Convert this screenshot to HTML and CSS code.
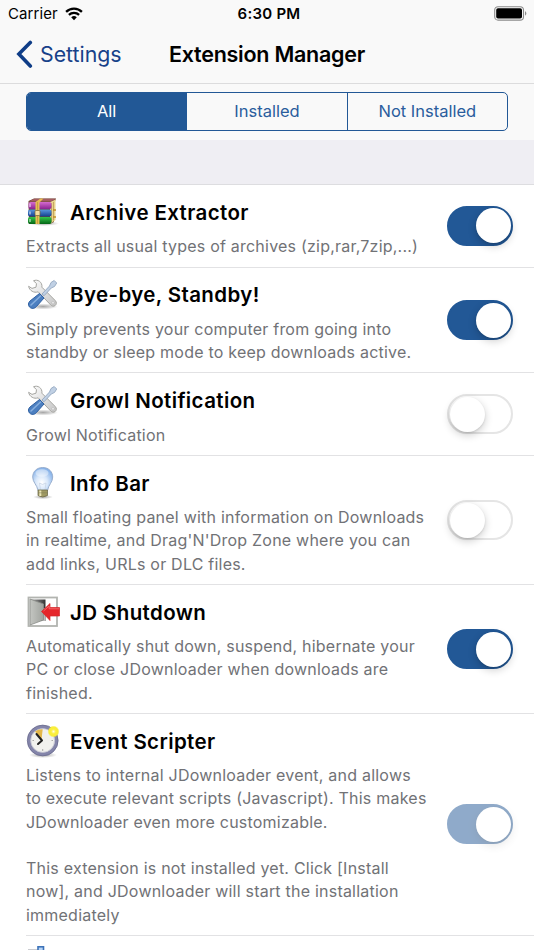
FILE: index.html
```
<!DOCTYPE html>
<html lang="en">
	<head>
		<meta charset="utf-8">
		<title>Extension Manager</title>
		<link rel="stylesheet" href="styles.css">
	</head>
	<body>
		<svg class="defs" width="0" height="0">
			<defs>
				<linearGradient id="steel" x1="0" y1="0" x2="1" y2="1">
					<stop offset="0" stop-color="#fff"/><stop offset="1" stop-color="#c4c4c4"/>
				</linearGradient>
				<linearGradient id="purple" x1="0" y1="0" x2="0" y2="1">
					<stop offset="0" stop-color="#d56bd0"/><stop offset="1" stop-color="#8b2390"/>
				</linearGradient>
				<linearGradient id="blue" x1="0" y1="0" x2="0" y2="1">
					<stop offset="0" stop-color="#5a98e0"/><stop offset="1" stop-color="#123f8f"/>
				</linearGradient>
				<linearGradient id="green" x1="0" y1="0" x2="0" y2="1">
					<stop offset="0" stop-color="#35c74c"/><stop offset="1" stop-color="#046415"/>
				</linearGradient>
				<linearGradient id="door" x1="0" y1="0" x2="1" y2="0">
					<stop offset="0" stop-color="#c4c6c2"/><stop offset="1" stop-color="#a0a39e"/>
				</linearGradient>
				<linearGradient id="dark" x1="0" y1="0" x2="1" y2="0">
					<stop offset="0" stop-color="#aaa"/><stop offset="1" stop-color="#333"/>
				</linearGradient>
				<radialGradient id="glass" cx=".45" cy=".65" r=".65">
					<stop offset="0" stop-color="#fff"/><stop offset=".45" stop-color="#d9e8fa"/><stop offset="1" stop-color="#80aee8"/>
				</radialGradient>
				<radialGradient id="spark">
					<stop offset="0" stop-color="#fffde0"/><stop offset=".4" stop-color="#fbef3c"/><stop offset=".75" stop-color="#f9ee3a"/><stop offset="1" stop-color="#f7ec30" stop-opacity="0"/>
				</radialGradient>
				<radialGradient id="shade">
					<stop offset="0" stop-color="#000" stop-opacity=".35"/><stop offset="1" stop-color="#000" stop-opacity="0"/>
				</radialGradient>
				<symbol id="tools" viewBox="0 0 34 34">
					<ellipse cx="17" cy="28.500" rx="15" ry="3" fill="url(#shade)"/>
					<path d="M7.500 2.800 C11.500 .8 16.600 4 15.900 9.200 L29.200 22.500 C32.500 25.800 28 30.300 24.800 27.100 L12.200 13.800 C8 15.400 3.300 12.500 2.600 8.300 L6 10.400 L10 9.200 L10.500 5.600 Z" fill="url(#steel)" stroke="#a6a6a2" stroke-width="1"/>
					<circle cx="27" cy="24.800" r="1.200" fill="#fff" stroke="#aaa" stroke-width=".6"/>
					<path d="M16 16 L23.500 8 L25 4.500 L28.200 2.500 L30.700 5 L28.500 8.500 L25.400 9.900 L18 17.800 Z" fill="#c0d0e4" stroke="#93a7bf" stroke-width=".9"/>
					<path d="M13.500 15.500 L18 20 L10.300 28.700 C8.500 30.800 5.400 31 3.500 29 C2 27.200 2 25 4 23 Z" fill="#4c7fc0" stroke="#2f60a2" stroke-width="1"/>
					<path d="M5 27 L14.500 18" stroke="#86aede" stroke-width="1.600" stroke-linecap="round"/>
				</symbol>
			</defs>
		</svg>

		<header class="status">
			<div class="carrier">
				<span class="carrier-name">Carrier</span>
				<svg width="18" height="14" viewBox="0 0 18 14">
					<path d="M1.100 4.900 A11.300 11.300 0 0 1 16.900 4.900" fill="none" stroke="#000" stroke-width="2.300"/>
					<path d="M3.900 7.900 A7.200 7.200 0 0 1 14.100 7.900" fill="none" stroke="#000" stroke-width="2.200"/>
					<path d="M6.200 10.300 A4 4 0 0 1 11.800 10.300 L9 13.200 Z"/>
				</svg>
			</div>
			<span class="time">6:30 PM</span>
			<svg class="battery" width="34" height="15" viewBox="0 0 34 15">
				<rect x=".7" y=".7" width="28.800" height="13.400" rx="3.400" fill="none" stroke="#8b8b8b" stroke-width="1.100"/>
				<rect x="2.200" y="2.200" width="25.800" height="10.400" rx="1.800"/>
				<path d="M31 5 Q33.800 7.400 31 9.800 Z" fill="#8b8b8b"/>
			</svg>
		</header>

		<nav class="nav">
			<a class="back" href="#">
				<svg width="17" height="28" viewBox="0 0 17 28">
					<path d="M14.300 2.500 L2.900 14.100 L14.300 26" fill="none" stroke="#0f3d87" stroke-width="3.600" stroke-linecap="round"/>
				</svg>
				<span>Settings</span>
			</a>
			<h1>Extension Manager</h1>
		</nav>

		<div class="filter">
			<div class="segments">
				<button class="segment active">All</button>
				<button class="segment">Installed</button>
				<button class="segment">Not Installed</button>
			</div>
		</div>

		<div class="spacer"></div>

		<ul class="list">
			<li class="row">
				<div class="info">
					<h2>
						<svg class="icon" viewBox="0 0 34 34">
							<ellipse cx="18" cy="28.500" rx="15" ry="2.500" fill="url(#shade)"/>
							<path d="M2.500 6 L8 3.500 H30 L28 9 V27 L24 29 H3 Z" fill="#6d4634"/>
							<path d="M24 7 L29.500 4.500 V25 L24 29 Z" fill="#ead68d"/>
							<path d="M25.500 8 V27 M27.500 7 V25.500" stroke="#ac8645" stroke-width=".6"/>
							<path d="M3 6.500 L8 3.800 H30 L25 6.500 Z" fill="#a35c61"/>
							<rect x="2.500" y="7" width="23" height="7" rx="2" fill="url(#purple)"/>
							<rect x="2" y="14.500" width="23.500" height="7" rx="2" fill="url(#blue)"/>
							<rect x="2" y="22" width="23.500" height="7" rx="2" fill="url(#green)"/>
							<path d="M4 8.500 V12 M4 16.500 V19.500 M4 24 V27" stroke="#fff" stroke-width="1.500" opacity=".6"/>
							<path d="M9.500 7 L14.500 3.500 H17.500 L13.500 7.500 V29 H9.500 Z" fill="#e7bd51"/>
							<path d="M11.500 7.500 V29" stroke="#896b2a" stroke-width=".7" stroke-dasharray="1 1"/>
							<rect x="9" y="15.500" width="5" height="5" rx="1" fill="#f4dfa0" stroke="#765e34" stroke-width=".7"/>
							<path d="M27 15 H30 M27 22 H30" stroke="#c39029" stroke-width="1.500"/>
						</svg>
						Archive Extractor
					</h2>
					<p>Extracts all usual types of archives (zip,rar,7zip,...)</p>
				</div>
				<span class="switch on"></span>
			</li>
			<li class="row">
				<div class="info">
					<h2><svg class="icon"><use href="#tools"/></svg>Bye-bye, Standby!</h2>
					<p>Simply prevents your computer from going into<br>standby or sleep mode to keep downloads active.</p>
				</div>
				<span class="switch on"></span>
			</li>
			<li class="row">
				<div class="info">
					<h2><svg class="icon"><use href="#tools"/></svg>Growl Notification</h2>
					<p>Growl Notification</p>
				</div>
				<span class="switch"></span>
			</li>
			<li class="row">
				<div class="info">
					<h2>
						<svg class="icon" viewBox="0 0 34 34">
							<ellipse cx="17" cy="31" rx="10" ry="2.200" fill="url(#shade)"/>
							<path d="M16.700 1.500 C10.400 1.500 6.700 6 6.700 11 C6.700 16.500 11 18.500 12 24.500 H21.500 C22.500 18.500 26.700 16.500 26.700 11 C26.700 6 23 1.500 16.700 1.500 Z" fill="url(#glass)" stroke="#94a9c8" stroke-width=".9"/>
							<ellipse cx="16" cy="7" rx="6.500" ry="3.800" fill="#fff" opacity=".4"/>
							<path d="M14.500 24 L13.500 17 L16.500 18.500 L20 17 L19 24" fill="none" stroke="#c9d5e6" stroke-width=".8"/>
							<path d="M12 24 H21.500 V29.500 Q16.700 32.500 12 29.500 Z" fill="#a09a63" stroke="#6f6c4c" stroke-width=".8"/>
							<path d="M14.300 24.500 V30" stroke="#ebe6b8" stroke-width="2"/>
							<path d="M12 26.800 H21.500" stroke="#7c7858" stroke-width=".5"/>
						</svg>
						Info Bar
					</h2>
					<p>Small floating panel with information on Downloads<br>in realtime, and Drag'N'Drop Zone where you can<br>add links, URLs or DLC files.</p>
				</div>
				<span class="switch"></span>
			</li>
			<li class="row">
				<div class="info">
					<h2>
						<svg class="icon" viewBox="0 0 34 34">
							<rect x="2.500" y="2.500" width="28.500" height="28.500" fill="#fff" stroke="#b2b4b0" stroke-width="1.800"/>
							<path d="M4.500 4.500 H19.500 V26 H10 L4.500 29 Z" fill="url(#dark)"/>
							<path d="M16 13 H19.500 V26 H16 Z" fill="#bbb"/>
							<path d="M4 4 L17.500 9 V25 L4 30 Z" fill="url(#door)" stroke="#8a8d88" stroke-width=".8"/>
							<path d="M15.500 16.500 L24 8.500 V12.500 H33.500 V21 H24 V25.500 Z" fill="#e5252a" stroke="#d2262a" stroke-width=".7"/>
							<path d="M17.500 16 L23.200 11 V13.800 H33" fill="none" stroke="#f4676a" stroke-width="1"/>
						</svg>
						JD Shutdown
					</h2>
					<p>Automatically shut down, suspend, hibernate your<br>PC or close JDownloader when downloads are<br>finished.</p>
				</div>
				<span class="switch on"></span>
			</li>
			<li class="row">
				<div class="info">
					<h2>
						<svg class="icon" viewBox="0 0 34 34">
							<ellipse cx="17" cy="31" rx="14" ry="3" fill="url(#shade)"/>
							<circle cx="16.700" cy="16.500" r="13.800" fill="#f1f1ee" stroke="#8485aa" stroke-width="3.400"/>
							<circle cx="16.700" cy="16.500" r="15.400" fill="none" stroke="#66678a" stroke-width=".7"/>
							<circle cx="16.700" cy="16.500" r="11.900" fill="none" stroke="#bfc0ce" stroke-width=".7"/>
							<path d="M15.500 15.500 L9 7.500 Q12.500 4.800 16.700 5.200 Z" fill="#e4b84b"/>
							<path d="M16 16.500 L10.500 10 M16 16.500 L12 20" stroke="#222" stroke-width="2" stroke-linecap="round"/>
							<path d="M16.700 25 V27 M6.500 16.500 H8 M25.500 16.500 H27" stroke="#aaa" stroke-width="1"/>
							<circle cx="27.500" cy="7.500" r="6" fill="url(#spark)"/>
						</svg>
						Event Scripter
					</h2>
					<p>Listens to internal JDownloader event, and allows<br>to execute relevant scripts (Javascript). This makes<br>JDownloader even more customizable.<br><br>This extension is not installed yet. Click [Install<br>now], and JDownloader will start the installation<br>immediately</p>
				</div>
				<span class="switch on disabled"></span>
			</li>
			<li class="row">
				<div class="info">
					<h2>
						<svg class="icon" viewBox="0 0 34 34">
							<rect x="2" y="3" width="10" height="10" fill="#c9cbd0"/>
							<rect x="12" y=".8" width="5.500" height="12" fill="#b9d5f5" stroke="#3d73b9" stroke-width="1.600"/>
						</svg>
					</h2>
				</div>
			</li>
		</ul>
	</body>
</html>
```
FILE: styles.css
```
* {
	box-sizing: border-box;
}
body {
	margin: 0;
	height: 950px;
	overflow: hidden;
	background: #fff;
	color: #000;
	font-family: Inter, "Liberation Sans", sans-serif;
}
.defs {
	display: block;
}
h1, h2, p, ul {
	margin: 0;
	padding: 0;
}

/* status bar */
.status {
	display: grid;
	grid-template-columns: 1fr auto 1fr;
	align-items: center;
	height: 27px;
	padding: 0 6px 0 8px;
	background: #f9f9f9;
	font-size: 15px;
}
.carrier {
	display: flex;
	align-items: center;
	gap: 7px;
}
.carrier-name {
	letter-spacing: .1px;
}
.time {
	padding-left: 2px;
	font-weight: 600;
	letter-spacing: .25px;
}
.battery {
	justify-self: end;
}

/* navigation */
.nav {
	display: grid;
	grid-template-columns: 1fr auto 1fr;
	align-items: center;
	height: 57px;
	padding: 0 16px 2px;
	background: #f9f9f9;
	border-bottom: 1px solid #dcdcdd;
}
.back {
	display: flex;
	align-items: center;
	gap: 7px;
	color: #174189;
	font-size: 21.300px;
	text-decoration: none;
}
.nav h1 {
	font-size: 21.500px;
	font-weight: 600;
	letter-spacing: -.25px;
}

/* filter */
.filter {
	height: 56px;
	padding: 8px 26px 0;
	background: #f9f9f9;
}
.segments {
	display: flex;
	height: 39px;
	border: 1px solid #225896;
	border-radius: 5px;
	overflow: hidden;
}
.segment {
	flex: 1;
	padding: 0 0 1px;
	border: 0;
	background: none;
	color: #2a5d9d;
	font: 16.500px Inter, sans-serif;
}
.segment + .segment {
	border-left: 1px solid #225896;
}
.segment.active {
	background: #225896;
	color: #fff;
}
.spacer {
	height: 45px;
	background: #efeef3;
	border-bottom: 1px solid #dddde0;
}

/* extension list */
.list {
	padding-left: 26px;
	list-style: none;
}
.row {
	display: flex;
	align-items: center;
	justify-content: space-between;
	padding: 9.300px 21px 8.100px 0;
	border-bottom: 1px solid #e2e2e4;
}
.row h2 {
	display: flex;
	align-items: center;
	gap: 10px;
	height: 36px;
	margin-bottom: 5px;
	font-size: 20.500px;
	font-weight: 600;
	letter-spacing: .38px;
	white-space: nowrap;
}
.row p {
	color: #717276;
	font-size: 16px;
	letter-spacing: .22px;
	line-height: 23.200px;
	white-space: nowrap;
}
.icon {
	width: 34px;
	height: 34px;
}
.switch {
	display: flex;
	flex: none;
	align-items: center;
	width: 66px;
	height: 40px;
	margin-bottom: 1px;
	padding: 0 .5px;
	border: 2px solid #e5e5e5;
	border-radius: 20px;
}
.switch::before {
	content: "";
	width: 35px;
	height: 35px;
	border-radius: 50%;
	background: #fff;
	box-shadow: 0 3px 8px rgba(0, 0, 0, .2), 0 1px 2px rgba(0, 0, 0, .1);
}
.switch.on {
	justify-content: flex-end;
	border-color: #225896;
	background: #225896;
}
.disabled {
	opacity: .5;
}
```
